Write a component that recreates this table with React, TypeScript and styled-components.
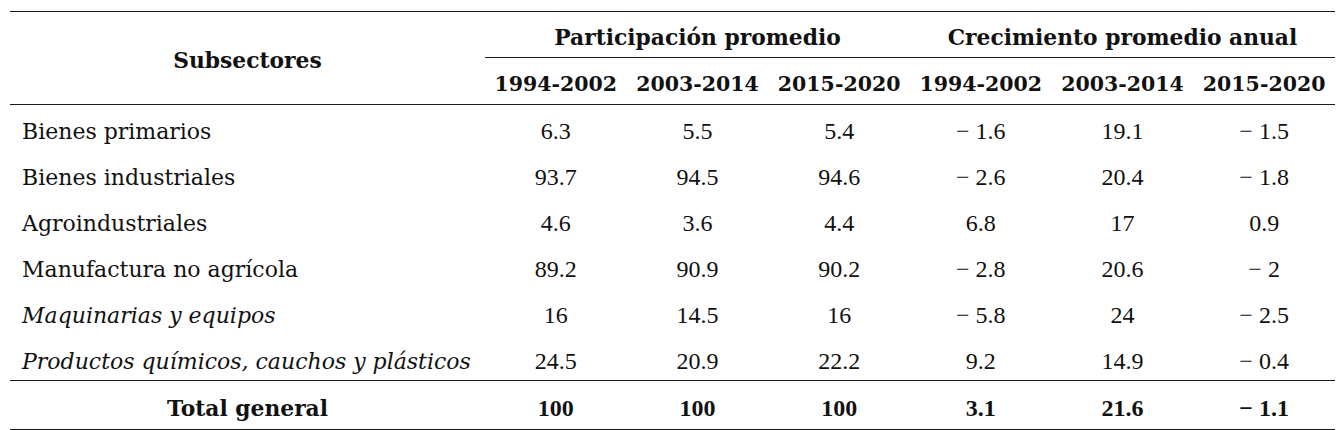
import * as React from 'react';
import styled, { createGlobalStyle } from 'styled-components';

const GlobalStyle = createGlobalStyle`
  body {
    margin: 0;
    background: #ffffff;
  }
`;

type Row = {
  label: string;
  italic?: boolean;
  values: string[];
};

const rows: Row[] = [
  { label: 'Bienes primarios', values: ['6.3', '5.5', '5.4', '− 1.6', '19.1', '− 1.5'] },
  { label: 'Bienes industriales', values: ['93.7', '94.5', '94.6', '− 2.6', '20.4', '− 1.8'] },
  { label: 'Agroindustriales', values: ['4.6', '3.6', '4.4', '6.8', '17', '0.9'] },
  { label: 'Manufactura no agrícola', values: ['89.2', '90.9', '90.2', '− 2.8', '20.6', '− 2'] },
  { label: 'Maquinarias y equipos', italic: true, values: ['16', '14.5', '16', '− 5.8', '24', '− 2.5'] },
  { label: 'Productos químicos, cauchos y plásticos', italic: true, values: ['24.5', '20.9', '22.2', '9.2', '14.9', '− 0.4'] },
];

const totals = ['100', '100', '100', '3.1', '21.6', '− 1.1'];
const periods = ['1994-2002', '2003-2014', '2015-2020'];

const Page = styled.div`
  padding: 11px 7px 0 10px;
`;

const Table = styled.table`
  width: 1325px;
  border-collapse: collapse;
  table-layout: fixed;
  color: #111111;
  font-family: "Liberation Serif", "DejaVu Serif", serif;
  font-size: 24px;
`;

const TopRow = styled.tr`
  border-top: 1px solid #1a1a1a;
`;

const HeadCell = styled.th<{ $rule?: boolean }>`
  font-family: "DejaVu Serif", "Liberation Serif", serif;
  font-size: 21.8px;
  font-weight: 700;
  text-align: center;
  vertical-align: middle;
  padding: 5px 0 0;
  height: 40px;
  border-bottom: ${(p) => (p.$rule ? '1px solid #1a1a1a' : 'none')};
`;

const YearCell = styled(HeadCell)`
  font-size: 20.5px;
  padding-top: 6px;
`;

const BodyRow = styled.tr<{ $first?: boolean }>`
  height: 46px;
  border-top: ${(p) => (p.$first ? '1px solid #1a1a1a' : 'none')};
`;

const LabelCell = styled.td<{ $italic?: boolean }>`
  font-family: "DejaVu Serif", "Liberation Serif", serif;
  font-size: 22px;
  font-style: ${(p) => (p.$italic ? 'italic' : 'normal')};
  padding: 8px 0 0 12px;
  white-space: nowrap;
  vertical-align: middle;
`;

const ValueCell = styled.td`
  text-align: center;
  padding: 8px 0 0;
  vertical-align: middle;
`;

const TotalRow = styled.tr`
  height: 49px;
  border-top: 1px solid #1a1a1a;
  border-bottom: 1px solid #1a1a1a;
`;

const TotalLabel = styled.td`
  font-family: "DejaVu Serif", "Liberation Serif", serif;
  font-size: 21.8px;
  font-weight: 700;
  text-align: center;
  padding: 6px 0 0;
`;

const TotalValue = styled.td`
  font-weight: 700;
  text-align: center;
  padding: 6px 0 0;
`;

export default function App() {
  return (
    <Page>
      <GlobalStyle />
      <Table>
        <colgroup>
          <col style={{ width: 475 }} />
          {[0, 1, 2, 3, 4, 5].map((i) => (
            <col key={i} />
          ))}
        </colgroup>
        <thead>
          <TopRow>
            <HeadCell rowSpan={2}>Subsectores</HeadCell>
            <HeadCell colSpan={3} $rule>
              Participación promedio
            </HeadCell>
            <HeadCell colSpan={3} $rule>
              Crecimiento promedio anual
            </HeadCell>
          </TopRow>
          <tr>
            {[...periods, ...periods].map((p, i) => (
              <YearCell key={i}>{p}</YearCell>
            ))}
          </tr>
        </thead>
        <tbody>
          {rows.map((row, i) => (
            <BodyRow key={row.label} $first={i === 0}>
              <LabelCell $italic={row.italic}>{row.label}</LabelCell>
              {row.values.map((v, j) => (
                <ValueCell key={j}>{v}</ValueCell>
              ))}
            </BodyRow>
          ))}
          <TotalRow>
            <TotalLabel>Total general</TotalLabel>
            {totals.map((v, j) => (
              <TotalValue key={j}>{v}</TotalValue>
            ))}
          </TotalRow>
        </tbody>
      </Table>
    </Page>
  );
}
